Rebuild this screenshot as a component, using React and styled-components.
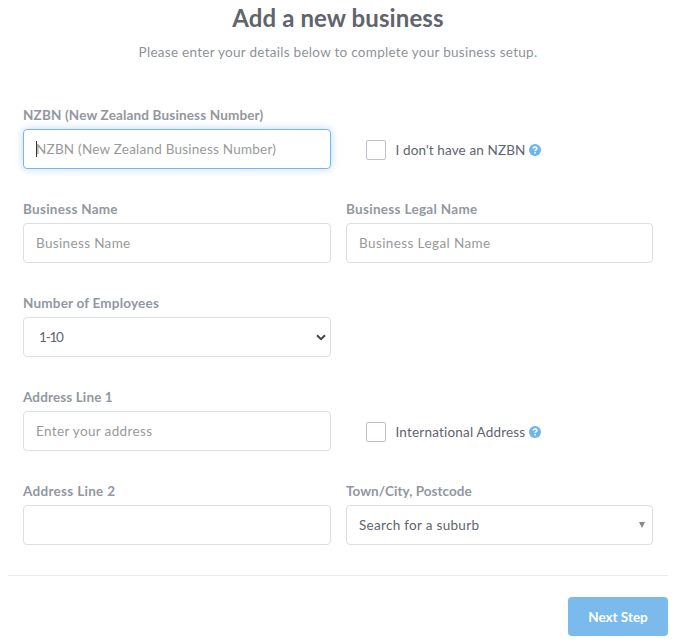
import React from 'react';
import styled, { createGlobalStyle } from 'styled-components';

const GlobalStyle = createGlobalStyle`
    * {
        box-sizing: border-box;
    }
    body {
        margin: 0;
        background-color: #fff;
        font-family: Lato, "Liberation Sans", sans-serif;
        overflow: hidden;
    }
`;
const Container = styled.div`
    width: 660px;
    height: 643px;
    margin-left: 8px;
    display: flex;
    flex-direction: column;
`;
const Title = styled.h1`
    margin: 3px 0 0;
    font-size: 24px;
    line-height: 30px;
    font-weight: bold;
    color: #60646d;
    text-align: center;
    letter-spacing: 0.1px;
`;
const Desc = styled.p`
    margin: 10px 0 0;
    font-size: 13.5px;
    line-height: 18px;
    color: #8e9299;
    text-align: center;
    letter-spacing: 0.28px;
`;
const Form = styled.div`
    margin-top: 45px;
    padding: 0 15px;
    display: flex;
    flex-direction: column;
    gap: 31px;
`;
const Row = styled.div`
    display: grid;
    grid-template-columns: 308px 307px;
    gap: 15px;
`;
const Field = styled.div`
    display: flex;
    flex-direction: column;
    gap: 5px;
`;
const Label = styled.label`
    height: 18px;
    font-size: 13.5px;
    line-height: 18px;
    font-weight: bold;
    color: #9297a1;
    letter-spacing: ${props => props.$spacing || '0.2px'};
`;
const Control = styled.div`
    position: relative;
    height: 40px;
    display: flex;
    align-items: center;
    border: 1px solid ${props => (props.$focused ? '#74b7f0' : '#d9dfe3')};
    border-radius: 4px;
    background-color: #fff;
    box-shadow: ${props => (props.$focused ? '0 0 8px rgba(102, 160, 233, 0.4)' : 'none')};
`;
const Input = styled.input`
    width: 100%;
    height: 100%;
    padding: 0 12px;
    border: none;
    outline: none;
    background: transparent;
    font-family: inherit;
    font-size: 13.5px;
    color: #60646d;
    letter-spacing: ${props => props.$spacing || '0.35px'};
    &::placeholder {
        color: #999;
        opacity: 1;
    }
`;
const Caret = styled.span`
    position: absolute;
    left: 12px;
    top: 11px;
    width: 1px;
    height: 16px;
    background-color: #333;
`;
const Value = styled.span`
    flex: 1;
    padding-left: ${props => props.$indent || '12px'};
    font-size: 13.5px;
    line-height: 18px;
    color: #60646d;
    letter-spacing: ${props => props.$spacing || '0.3px'};
`;
const Chevron = styled.svg`
    width: 10px;
    height: 7px;
    margin-right: 4px;
`;
const Triangle = styled.span`
    margin-right: 7px;
    border-left: 3.5px solid transparent;
    border-right: 3.5px solid transparent;
    border-top: 6px solid #888;
`;
const Option = styled.div`
    height: 40px;
    margin-top: 23px;
    padding: 2px 0 0 20px;
    display: flex;
    align-items: center;
`;
const Box = styled.span`
    width: 20px;
    height: 20px;
    border: 1px solid #bfc0d0;
    border-radius: 2px;
`;
const OptionText = styled.span`
    margin: 0 4px 0 9.5px;
    font-size: 13.5px;
    line-height: 18px;
    color: #60646d;
    letter-spacing: ${props => props.$spacing || '0.2px'};
`;
const Help = styled.svg`
    width: 12px;
    height: 12px;
`;
const Footer = styled.div`
    margin-top: 30px;
    padding-top: 21px;
    border-top: 1px solid #ebebed;
    display: flex;
    justify-content: flex-end;
`;
const Button = styled.button`
    width: 100px;
    height: 39px;
    padding: 0;
    border: none;
    border-radius: 4px;
    background-color: #7abaed;
    color: #fff;
    font-family: inherit;
    font-size: 13.5px;
    font-weight: bold;
    cursor: pointer;
`;

const TextField = ({ label, placeholder, focused, labelSpacing, spacing }) => (
    <Field>
        <Label $spacing={labelSpacing}>{label}</Label>
        <Control $focused={focused}>
            <Input placeholder={placeholder} $spacing={spacing} />
            {focused && <Caret />}
        </Control>
    </Field>
);

const CheckOption = ({ text, spacing }) => (
    <Option>
        <Box />
        <OptionText $spacing={spacing}>{text}</OptionText>
        <Help viewBox="0 0 12 12">
            <circle cx="6" cy="6" r="6" fill="#6cb5ed" />
            <path d="M4.1 4.6C4.2 3.4 5 2.9 6 2.9C7.1 2.9 7.9 3.5 7.9 4.4C7.9 5.6 6.1 5.6 6.1 7" fill="none" stroke="#fff" strokeWidth="1.5" />
            <rect x="5.3" y="7.9" width="1.6" height="1.6" fill="#fff" />
        </Help>
    </Option>
);

const App = () => {
  return (
    <Container>
        <GlobalStyle />
        <Title>Add a new business</Title>
        <Desc>Please enter your details below to complete your business setup.</Desc>
        <Form>
            <Row>
                <TextField
                    label="NZBN (New Zealand Business Number)"
                    placeholder="NZBN (New Zealand Business Number)"
                    labelSpacing="0.16px"
                    spacing="0.23px"
                    focused
                />
                <CheckOption text="I don't have an NZBN" spacing="0.12px" />
            </Row>
            <Row>
                <TextField label="Business Name" placeholder="Business Name" labelSpacing="0.27px" />
                <TextField
                    label="Business Legal Name"
                    placeholder="Business Legal Name"
                    labelSpacing="0.3px"
                    spacing="0.4px"
                />
            </Row>
            <Row>
                <Field>
                    <Label>Number of Employees</Label>
                    <Control>
                        <Value $indent="15px" $spacing="-1.2px">1-10</Value>
                        <Chevron viewBox="0 0 10 7">
                            <path d="M1 1.2L5 5.2L9 1.2" fill="none" stroke="#444" strokeWidth="2" />
                        </Chevron>
                    </Control>
                </Field>
            </Row>
            <Row>
                <TextField label="Address Line 1" placeholder="Enter your address" labelSpacing="0.12px" />
                <CheckOption text="International Address" spacing="0.19px" />
            </Row>
            <Row>
                <TextField label="Address Line 2" labelSpacing="0.3px" />
                <Field>
                    <Label $spacing="0.05px">Town/City, Postcode</Label>
                    <Control>
                        <Value>Search for a suburb</Value>
                        <Triangle />
                    </Control>
                </Field>
            </Row>
        </Form>
        <Footer>
            <Button>Next Step</Button>
        </Footer>
    </Container>
  )
}

export default App
